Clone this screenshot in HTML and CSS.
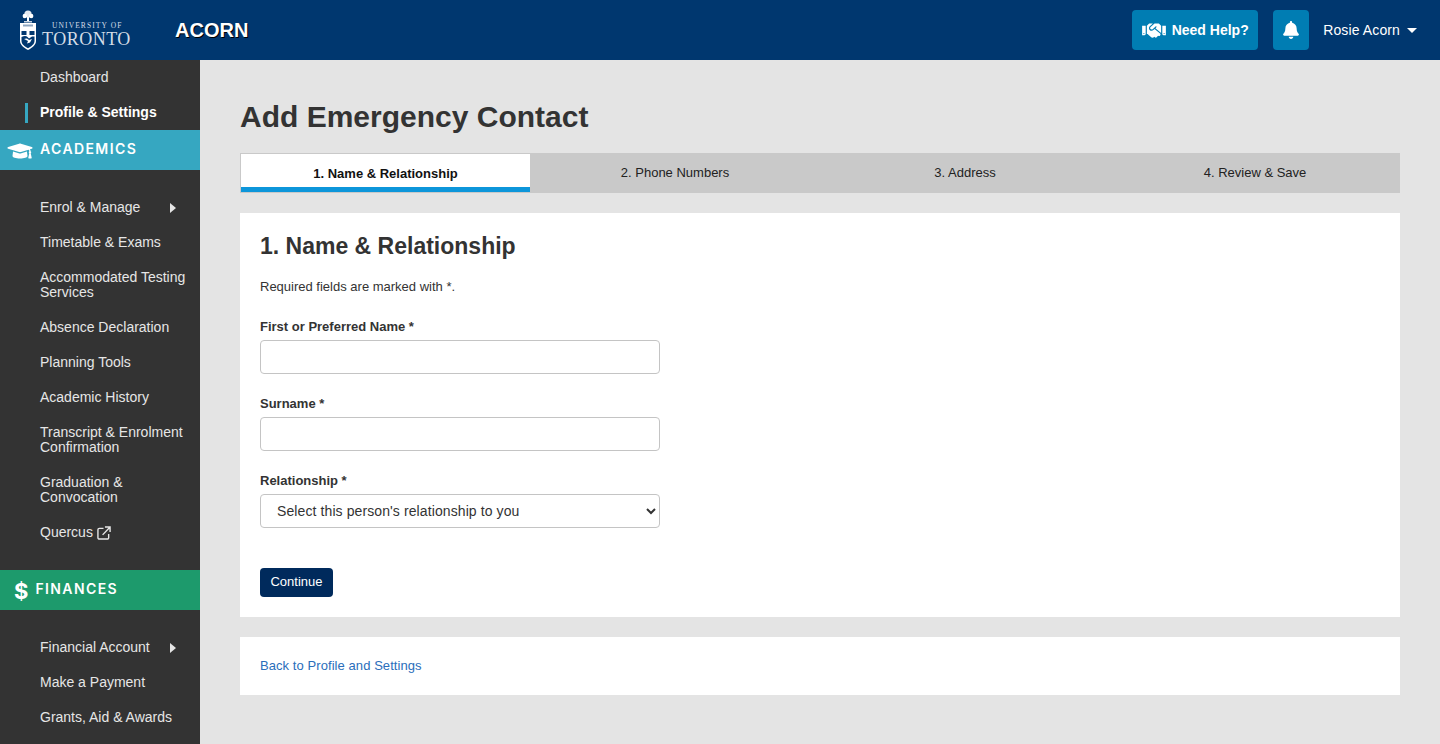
FILE: index.html
```html
<!DOCTYPE html>
<html lang="en">
<head>
<meta charset="utf-8">
<title>Add Emergency Contact - ACORN</title>
<link rel="stylesheet" href="styles.css">
</head>
<body>
<header class="topbar">
  <div class="brand">
    <svg class="crest" viewBox="0 0 16 40">
      <circle cx="8" cy="4" r="3.600" fill="#e4eaf1"/>
      <circle cx="4.800" cy="6" r="2.200" fill="#fff"/>
      <circle cx="11.200" cy="6" r="2.200" fill="#fff"/>
      <path d="M7 7h2v4H7z" fill="#fff"/>
      <path d="M4 11h8v1.500H4z" fill="#c5d2e0"/>
      <path d="M0 13h16v6H0z" fill="#fff"/>
      <path d="M3 14.500h10v2H3z" fill="#8ea6c0"/>
      <path d="M0 19h16v12c0 4-4 7-8 9-4-2-8-5-8-9z" fill="#fff"/>
      <path d="M1.500 21h5v4h-5zM9.500 21h5v4h-5z" fill="#00376f"/>
      <path d="M1.500 27c3-1.500 5-1 6 0l1.500 1.500 3-2h2.500V31c0 3-3 5.500-6.500 7.300C4.500 36.500 1.500 34 1.500 31z" fill="#00376f"/>
      <path d="M4 29c2-1 4-.5 5 1l3-1-2 3.500-3 1 1-2.500z" fill="#fff"/>
    </svg>
    <div class="wordmark">
      <span class="wm-top">UNIVERSITY OF</span>
      <span class="wm-main">TORONTO</span>
    </div>
    <span class="appname">ACORN</span>
  </div>
  <div class="top-actions">
    <button class="help-btn" type="button">
      <svg width="24" height="19" viewBox="0 0 640 512" fill="#fff"><path d="M434.7 64h-85.9c-8 0-15.7 3-21.6 8.4l-98.3 90c-.1.1-.2.3-.3.4-16.6 15.6-16.3 40.5-2.1 56 12.7 13.9 39.4 17.6 56.1 2.7.1-.1.3-.1.4-.2l79.9-73.2c6.5-5.9 16.7-5.5 22.6 1 6 6.5 5.5 16.6-1 22.6l-26.1 23.9L504 313.8c2.9 2.4 5.5 5 7.9 7.7V128l-54.6-54.6c-5.9-6-14.1-9.4-22.6-9.4zM544 128.2v223.9c0 17.7 14.3 32 32 32h64V128.2h-96zm48 223.9c-8.8 0-16-7.2-16-16s7.2-16 16-16 16 7.2 16 16-7.2 16-16 16zM0 384h64c17.7 0 32-14.3 32-32V128.2H0V384zm48-63.9c8.8 0 16 7.2 16 16s-7.2 16-16 16-16-7.2-16-16c0-8.9 7.2-16 16-16zm435.9 18.6L334.6 217.5l-30 27.5c-29.7 27.1-75.2 24.5-101.7-4.4-26.9-29.4-24.8-74.9 4.4-101.7L289.1 64h-83.8c-8.500 0-16.600 3.400-22.600 9.400L128 128v223.900h18.300l90.500 81.900c27.400 22.300 67.700 18.100 90-9.300l.2-.2 17.900 15.500c15.900 13 39.400 10.500 52.300-5.400l31.400-38.600 5.400 4.400c13.700 11.100 33.900 9.100 45-4.700l9.500-11.700c11.200-13.800 9.100-33.900-4.600-45.100z"/></svg>
      <span>Need Help?</span>
    </button>
    <button class="bell-btn" type="button" aria-label="Notifications">
      <svg width="16" height="18" viewBox="0 0 448 512" fill="#fff"><path d="M224 512c35.32 0 63.97-28.65 63.97-64H160.03c0 35.35 28.65 64 63.97 64zm215.39-149.71c-19.32-20.76-55.47-51.99-55.47-154.29 0-77.7-54.48-139.9-127.94-155.16V32c0-17.67-14.32-32-31.98-32s-31.98 14.33-31.98 32v20.84C118.56 68.1 64.08 130.3 64.08 208c0 102.3-36.15 133.53-55.47 154.29-6 6.45-8.66 14.16-8.61 21.71.11 16.4 12.98 32 32.1 32h383.8c19.12 0 32-15.6 32.1-32 .05-7.55-2.61-15.27-8.61-21.71z"/></svg>
    </button>
    <div class="user">
      <span>Rosie Acorn</span>
      <i class="caret"></i>
    </div>
  </div>
</header>
<div class="layout">
  <nav class="sidebar">
    <a class="nav-item">Dashboard</a>
    <a class="nav-item is-current">Profile &amp; Settings</a>
    <div class="band band-academics">
      <svg class="band-icon" width="26" height="20" viewBox="0 0 640 512" fill="#fff"><path transform="translate(640 0) scale(-1 1)" d="M622.34 153.2L343.4 67.5c-15.2-4.67-31.6-4.67-46.79 0L17.66 153.2c-23.54 7.23-23.54 38.36 0 45.59l48.63 14.94c-10.67 13.19-17.23 29.28-17.88 46.9C38.78 266.15 32 276.11 32 288c0 10.78 5.68 19.85 13.86 25.65L20.33 428.53C18.11 438.52 25.71 448 35.94 448h56.11c10.24 0 17.84-9.48 15.62-19.47L82.14 313.65C90.32 307.85 96 298.78 96 288c0-11.57-6.47-21.25-15.66-26.87.76-15.02 8.44-28.3 20.69-36.72L296.6 284.5c9.06 2.78 26.44 6.25 46.79 0l278.95-85.7c23.55-7.24 23.55-38.36 0-45.6zM352.79 315.09c-28.53 8.76-52.84 3.92-65.59 0l-145.02-44.55L128 384c0 35.35 85.96 64 192 64s192-28.65 192-64l-14.18-113.47-145.03 44.56z"/></svg>
      <span>ACADEMICS</span>
    </div>
    <div class="nav-group">
      <a class="nav-item has-sub">Enrol &amp; Manage<i class="sub-arrow"></i></a>
      <a class="nav-item">Timetable &amp; Exams</a>
      <a class="nav-item">Accommodated Testing Services</a>
      <a class="nav-item">Absence Declaration</a>
      <a class="nav-item">Planning Tools</a>
      <a class="nav-item">Academic History</a>
      <a class="nav-item">Transcript &amp; Enrolment Confirmation</a>
      <a class="nav-item">Graduation &amp; Convocation</a>
      <a class="nav-item">Quercus
        <svg class="ext" width="14" height="14" viewBox="0 0 15 15" fill="none" stroke="#e6e6e6" stroke-width="1.5"><path d="M7 2.500H2.500a1.500 1.500 0 0 0-1.500 1.500v8.500a1.500 1.500 0 0 0 1.500 1.500H11a1.500 1.500 0 0 0 1.500-1.500V8.500"/><path d="M6 9.500 13.500 1.500M8.500 1h5.500v5.500"/></svg>
      </a>
    </div>
    <div class="band band-finances">
      <span class="dollar">$</span>
      <span>FINANCES</span>
    </div>
    <div class="nav-group">
      <a class="nav-item has-sub">Financial Account<i class="sub-arrow"></i></a>
      <a class="nav-item">Make a Payment</a>
      <a class="nav-item">Grants, Aid &amp; Awards</a>
    </div>
  </nav>
  <main class="content">
    <h1 class="page-title">Add Emergency Contact</h1>
    <div class="tabs">
      <div class="tab is-active">1. Name &amp; Relationship</div>
      <div class="tab">2. Phone Numbers</div>
      <div class="tab">3. Address</div>
      <div class="tab">4. Review &amp; Save</div>
    </div>
    <section class="card form-card">
      <h2 class="card-title">1. Name &amp; Relationship</h2>
      <p class="req-note">Required fields are marked with *.</p>
      <form>
        <div class="field">
          <label for="fname">First or Preferred Name *</label>
          <input id="fname" type="text">
        </div>
        <div class="field">
          <label for="sname">Surname *</label>
          <input id="sname" type="text">
        </div>
        <div class="field">
          <label for="rel">Relationship *</label>
          <select id="rel"><option>Select this person's relationship to you</option></select>
        </div>
        <button class="continue" type="button">Continue</button>
      </form>
    </section>
    <section class="card link-card">
      <a class="back-link">Back to Profile and Settings</a>
    </section>
  </main>
</div>
</body>
</html>
```
FILE: styles.css
```css
* { box-sizing: border-box; }
html, body { margin: 0; height: 100%; }
body {
  font-family: "Liberation Sans", Arial, sans-serif;
  font-size: 13px;
  color: #333;
  background: #e4e4e4;
  overflow: hidden;
}
.topbar {
  height: 60px;
  background: #00376f;
  display: flex;
  align-items: center;
  justify-content: space-between;
  padding: 0 23px 0 20px;
}
.brand { display: flex; align-items: center; }
.crest { flex: none; width: 16px; height: 40px; }
.wordmark {
  display: flex;
  flex-direction: column;
  margin: 9px 0 0 6px;
  width: 133px;
  font-family: "Liberation Serif", serif;
  color: #d3dce6;
}
.wm-top { font-size: 7.500px; line-height: 10px; letter-spacing: 1.100px; margin-left: 10px; }
.wm-main { font-size: 18px; line-height: 17px; letter-spacing: .5px; }
.appname {
  font-size: 20px;
  font-weight: 700;
  color: #fff;
  text-shadow: 1px 1px 0 #000;
}
.top-actions { display: flex; align-items: center; }
.help-btn, .bell-btn {
  height: 40px;
  border: 0;
  border-radius: 4px;
  background: #007db3;
  color: #fff;
  font: 700 14px "Liberation Sans", Arial, sans-serif;
  display: flex;
  align-items: center;
  justify-content: center;
  padding: 0;
}
.help-btn { width: 126px; gap: 6px; }
.bell-btn { width: 36px; margin-left: 15px; }
.user {
  display: flex;
  align-items: center;
  color: #fff;
  font-size: 14px;
  letter-spacing: .12px;
  margin-left: 14px;
}
.caret {
  margin-left: 7px;
  border-left: 5px solid transparent;
  border-right: 5px solid transparent;
  border-top: 5px solid #fff;
}
.layout { display: flex; height: 684px; }
.sidebar {
  width: 200px;
  flex: none;
  background: #333;
  overflow: hidden;
}
.nav-item {
  position: relative;
  display: flex;
  align-items: center;
  padding: 10px 10px 10px 40px;
  font-size: 14px;
  line-height: 15px;
  color: #e6e6e6;
}
.nav-item.is-current { color: #fff; font-weight: 700; }
.is-current::before {
  content: "";
  position: absolute;
  left: 25px;
  top: 8px;
  width: 3px;
  height: 20px;
  background: #36a7c1;
}
.ext { margin-left: 4px; }
.sub-arrow {
  position: absolute;
  left: 170px;
  top: 13px;
  border-top: 5px solid transparent;
  border-bottom: 5px solid transparent;
  border-left: 6px solid #e6e6e6;
}
.nav-group { padding: 20px 0; }
.band {
  height: 40px;
  display: flex;
  align-items: center;
  color: #fff;
  font-family: Inter, "Liberation Sans", sans-serif;
  font-size: 14px;
  font-weight: 600;
  letter-spacing: 1.400px;
  padding-bottom: 3px;
}
.band-academics { background: #36a7c1; padding-left: 7px; }
.band-icon { margin-right: 7px; margin-top: 4px; }
.band-finances { background: #1d9a6c; padding-left: 14px; }
.dollar { font-size: 22px; font-weight: 700; margin-right: 7px; margin-top: 5px; letter-spacing: 0; }
.content {
  flex: 1;
  min-width: 0;
  padding: 37px 40px 0;
}
.page-title {
  margin: 0 0 17px;
  font-size: 30px;
  line-height: 39px;
  font-weight: 700;
  color: #333;
}
.tabs {
  display: grid;
  grid-template-columns: repeat(4, 1fr);
  height: 40px;
  background: #c9c9c9;
}
.tab {
  display: flex;
  align-items: center;
  justify-content: center;
  color: #222;
  font-size: 13px;
  padding-bottom: 1px;
}
.tab.is-active {
  margin: 1px 0 1px 1px;
  background: #fff;
  border-bottom: 5px solid #0d96da;
  color: #111;
  font-weight: 700;
  padding: 6px 0 0;
}
.card { background: #fff; margin-top: 20px; padding: 0 20px; }
.form-card { height: 404px; padding-top: 18px; }
.card-title { margin: 0 0 17px; font-size: 23px; line-height: 31px; font-weight: 700; color: #333; }
.req-note { margin: 0 0 25px; font-size: 13px; line-height: 15px; }
.field { width: 400px; margin-bottom: 22px; }
.field label { display: block; font-weight: 700; font-size: 13px; line-height: 15px; margin-bottom: 6px; }
.field input, .field select {
  display: block;
  width: 100%;
  height: 34px;
  border: 1px solid #c4c4c4;
  border-radius: 4px;
  background: #fff;
  font: 14px "Liberation Sans", Arial, sans-serif;
  letter-spacing: .1px;
  color: #333;
  padding: 0 12px;
}
.continue {
  display: block;
  margin-top: 40px;
  width: 73px;
  height: 29px;
  border: 0;
  border-radius: 4px;
  background: #002a5c;
  color: #fff;
  font: 13px "Liberation Sans", Arial, sans-serif;
  padding: 0 0 2px;
}
.link-card { height: 58px; display: flex; align-items: center; padding-bottom: 2px; }
.back-link { color: #2a6ebb; font-size: 13px; letter-spacing: .07px; }
```
